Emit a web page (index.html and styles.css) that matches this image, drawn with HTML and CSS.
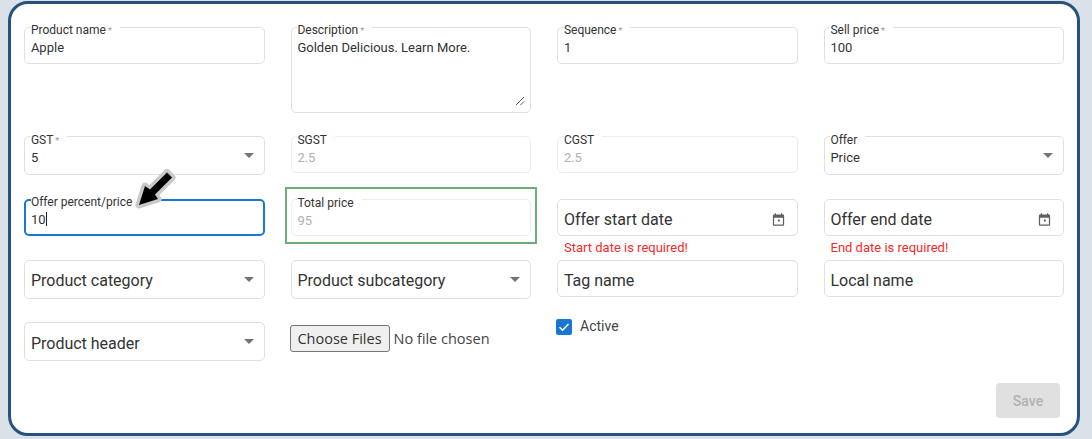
FILE: index.html
```html
<!DOCTYPE html>
<html lang="en">
<head>
<meta charset="utf-8">
<title>Product form</title>
<link rel="stylesheet" href="styles.css">
</head>
<body>
<main class="card">
  <form class="form">
    <div class="cell">
      <div class="field"><span class="label">Product name<i class="req">*</i></span><div class="value">Apple</div></div>
    </div>
    <div class="cell">
      <div class="field field-multi"><span class="label">Description<i class="req">*</i></span><div class="value">Golden Delicious. Learn More.</div>
        <svg class="grip" viewBox="0 0 10 10" width="10" height="10"><path d="M1 9 9 1M5.500 9 9 5.500" stroke="#555" stroke-width="1" fill="none"/></svg>
      </div>
    </div>
    <div class="cell">
      <div class="field"><span class="label">Sequence<i class="req">*</i></span><div class="value">1</div></div>
    </div>
    <div class="cell">
      <div class="field"><span class="label">Sell price<i class="req">*</i></span><div class="value">100</div></div>
    </div>

    <div class="cell">
      <div class="field field-select"><span class="label">GST<i class="req">*</i></span><div class="value">5</div>
        <svg class="caret-icon" viewBox="0 0 24 24" width="24" height="24"><path d="M7 10l5 5 5-5z"/></svg>
      </div>
    </div>
    <div class="cell">
      <div class="field field-disabled"><span class="label">SGST</span><div class="value">2.5</div></div>
    </div>
    <div class="cell">
      <div class="field field-disabled"><span class="label">CGST</span><div class="value">2.5</div></div>
    </div>
    <div class="cell">
      <div class="field field-select"><span class="label">Offer</span><div class="value">Price</div>
        <svg class="caret-icon" viewBox="0 0 24 24" width="24" height="24"><path d="M7 10l5 5 5-5z"/></svg>
      </div>
    </div>

    <div class="cell">
      <div class="field field-focus"><span class="label">Offer percent/price</span><div class="value">10<span class="cursor"></span></div></div>
    </div>
    <div class="cell">
      <div class="highlight">
        <div class="field field-disabled"><span class="label">Total price</span><div class="value">95</div></div>
      </div>
    </div>
    <div class="cell">
      <div class="field field-plain"><div class="value">Offer start date</div>
        <svg class="date-icon" viewBox="0 0 24 24" width="15" height="15"><path d="M19 4h-1V2h-2v2H8V2H6v2H5c-1.100 0-2 .9-2 2v14c0 1.100.9 2 2 2h14c1.100 0 2-.9 2-2V6c0-1.100-.9-2-2-2zm0 16H5V9h14v11zM11 12h3v3h-3z"/></svg>
      </div>
      <p class="error">Start date is required!</p>
    </div>
    <div class="cell">
      <div class="field field-plain"><div class="value">Offer end date</div>
        <svg class="date-icon" viewBox="0 0 24 24" width="15" height="15"><path d="M19 4h-1V2h-2v2H8V2H6v2H5c-1.100 0-2 .9-2 2v14c0 1.100.9 2 2 2h14c1.100 0 2-.9 2-2V6c0-1.100-.9-2-2-2zm0 16H5V9h14v11zM11 12h3v3h-3z"/></svg>
      </div>
      <p class="error">End date is required!</p>
    </div>

    <div class="cell">
      <div class="field field-plain field-select"><div class="value">Product category</div>
        <svg class="caret-icon" viewBox="0 0 24 24" width="24" height="24"><path d="M7 10l5 5 5-5z"/></svg>
      </div>
    </div>
    <div class="cell">
      <div class="field field-plain field-select"><div class="value">Product subcategory</div>
        <svg class="caret-icon" viewBox="0 0 24 24" width="24" height="24"><path d="M7 10l5 5 5-5z"/></svg>
      </div>
    </div>
    <div class="cell">
      <div class="field field-plain"><div class="value">Tag name</div></div>
    </div>
    <div class="cell">
      <div class="field field-plain"><div class="value">Local name</div></div>
    </div>

    <div class="cell">
      <div class="field field-plain field-select field-tall"><div class="value">Product header</div>
        <svg class="caret-icon" viewBox="0 0 24 24" width="24" height="24"><path d="M7 10l5 5 5-5z"/></svg>
      </div>
    </div>
    <div class="cell cell-file">
      <input class="file" type="file" multiple>
    </div>
    <div class="cell cell-check">
      <span class="checkbox"><svg viewBox="0 0 16 16" width="16" height="16"><path d="M3.500 8.200 6.600 11.200 12.500 5" stroke="#fff" stroke-width="1.600" fill="none"/></svg></span>
      <span class="check-label">Active</span>
    </div>
  </form>
  <div class="actions"><button class="save" type="button" disabled>Save</button></div>
  <svg class="pointer" viewBox="0 0 52 52" width="52" height="52"><path class="pointer-shape" d="M38 10.500 43 15.500 26 32.500 29 37 10 43 16 24 21 27.500Z"/></svg>
</main>
</body>
</html>
```
FILE: styles.css
```css
* { box-sizing: border-box; }
html, body { height: 100%; }
body {
  margin: 0;
  padding: 1px 12px 3px 8px;
  background: #dae1e9;
  font-family: Roboto, "Liberation Sans", sans-serif;
  overflow: hidden;
}
.card {
  position: relative;
  width: 1072px;
  height: 435px;
  padding: 23px 13px 0;
  background: #fff;
  border: 3px solid #27527d;
  border-radius: 20px;
}
.form {
  display: grid;
  grid-template-columns: repeat(4, 1fr);
  grid-template-rows: 109px 63px 61px 62px auto;
  column-gap: 26px;
}
.cell { min-width: 0; }
.field {
  position: relative;
  height: 37px;
  padding: 12px 6px 0 5.900px;
  border: 1px solid #e0e0e0;
  border-radius: 5px;
  color: #333;
}
.field-multi { height: 86px; }
.field-select { height: 38.500px; padding-top: 13px; }
.field-tall { height: 39px; }
.label {
  position: absolute;
  top: -5px;
  left: 5.900px;
  padding-right: 8px;
  background: #fff;
  font-size: 12px;
  line-height: 14px;
  color: #333;
}
.field-select .label,
.field-disabled .label { top: -4px; }
.req {
  margin-left: 2px;
  font-style: normal;
  font-size: 9px;
  color: #999;
}
.value {
  font-size: 13px;
  line-height: 15px;
  color: #333;
}
.field-disabled { border-color: #eeeeee; padding-top: 13px; }
.field-disabled .value { color: #b0b0b0; }
.field-plain { padding-top: 10px; }
.field-plain .value {
  font-size: 16px;
  line-height: 19px;
}
.field-focus {
  border: 2px solid #1976d2;
  padding: 11px 5px 0 4.900px;
}
.field-focus .label { left: 4.900px; top: -6px; }
.cursor {
  display: inline-block;
  width: 1px;
  height: 14px;
  vertical-align: -2px;
  background: #222;
}
.highlight {
  margin: -12px -6px 0;
  padding: 10px 4px 0;
  height: 57px;
  border: 2px solid #6aaf78;
}
.caret-icon {
  position: absolute;
  top: 6px;
  right: 3px;
  fill: #757575;
}
.field-tall .value { padding-top: 1px; }
.date-icon {
  position: absolute;
  top: 12px;
  right: 11px;
  fill: #5f5f5f;
}
.grip { position: absolute; right: 5px; bottom: 6px; }
.error {
  margin: 4px 0 0 7px;
  font-size: 13px;
  line-height: 16px;
  color: #f52a2a;
}
.cell-file { padding-top: 3px; margin-left: -1px; }
.file {
  font-family: "Open Sans", sans-serif;
  font-size: 14.500px;
  color: #444;
}
.file::file-selector-button {
  width: 100px;
  height: 27px;
  margin-right: 4px;
  padding: 0;
  font: inherit;
  color: #333;
  background: #efefef;
  border: 1px solid #767676;
  border-radius: 3px;
}
.cell-check {
  display: flex;
  align-items: center;
  gap: 8px;
  height: 16px;
  margin: -3px 0 0 -1px;
}
.checkbox {
  width: 16px;
  height: 16px;
  background: #1976d2;
  border-radius: 2px;
}
.checkbox svg { display: block; }
.check-label { font-size: 14px; line-height: 14px; margin-top: -2px; color: #444; }
.actions {
  position: absolute;
  right: 17px;
  bottom: 15px;
}
.save {
  display: block;
  width: 64px;
  height: 35px;
  padding: 0;
  font-family: Roboto, sans-serif;
  font-size: 14px;
  font-weight: 500;
  color: #b2b2b2;
  background: #e0e0e0;
  border: 0;
  border-radius: 4px;
}
.pointer {
  position: absolute;
  left: 118px;
  top: 158px;
}
.pointer-shape {
  fill: #000;
  stroke: #c9c9c9;
  stroke-width: 7px;
  stroke-linejoin: round;
  paint-order: stroke;
}
```
